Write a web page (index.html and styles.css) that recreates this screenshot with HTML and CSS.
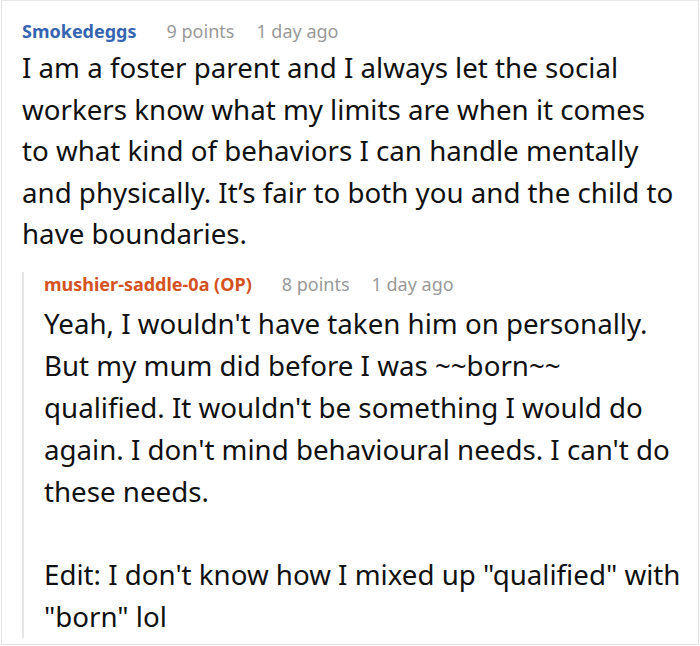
FILE: index.html
```html
<!DOCTYPE html>
<html>
<head>
<meta charset="utf-8">
<link rel="stylesheet" href="styles.css">
</head>
<body>
<div class="thread">
  <div class="comment">
    <div class="meta">
      <span class="user">Smokedeggs</span>
      <span class="info">9 points</span>
      <span class="info">1 day ago</span>
    </div>
    <div class="body main">
      <p>I am a foster parent and I always let the social workers know what my limits are when it comes to what kind of behaviors I can handle mentally and physically. It’s fair to both you and the child to have boundaries.</p>
    </div>
    <div class="reply">
      <div class="meta">
        <span class="user op">mushier-saddle-0a (OP)</span>
        <span class="info">8 points</span>
        <span class="info">1 day ago</span>
      </div>
      <div class="body">
        <p>Yeah, I wouldn't have taken him on personally. But my mum did before I was ~~born~~ qualified. It wouldn't be something I would do again. I don't mind behavioural needs. I can't do these needs.</p>
        <p>Edit: I don't know how I mixed up "qualified" with "born" lol</p>
      </div>
    </div>
  </div>
</div>
</body>
</html>
```

FILE: styles.css
```css
html, body {
  margin: 0;
  padding: 0;
  background: #fff;
}
.thread {
  width: 698px;
  height: 645px;
  margin-left: 1px;
  border: 1px solid #e2e2e2;
  border-top-color: #e8e8e8;
  box-sizing: border-box;
  overflow: hidden;
  font-family: "Noto Sans", "Open Sans", sans-serif;
  color: #111;
}
.comment {
  padding: 18px 8px 0 20px;
}
.meta {
  display: flex;
  gap: 22px;
  font-size: 18px;
  line-height: 24px;
}
.user {
  color: #3565b0;
  font-weight: 700;
  margin-right: 8px;
}
.user.op {
  color: #d4521d;
}
.info {
  color: #999;
}
.body {
  font-size: 27.7px;
  line-height: 41.6px;
  margin-top: 4px;
}
.body.main {
  margin-right: 14px;
}
.body p {
  margin: 0;
}
.body p + p {
  margin-top: 41.6px;
}
.reply {
  margin-top: 27px;
  margin-right: 7px;
  border-left: 2px solid #e6e6e6;
  padding-left: 20px;
}
.reply .meta {
  margin-top: -10px;
}
.reply .body {
  margin-top: 7px;
  margin-bottom: -12px;
  line-height: 41.9px;
}
.reply .body p + p {
  margin-top: 41.9px;
}
```
